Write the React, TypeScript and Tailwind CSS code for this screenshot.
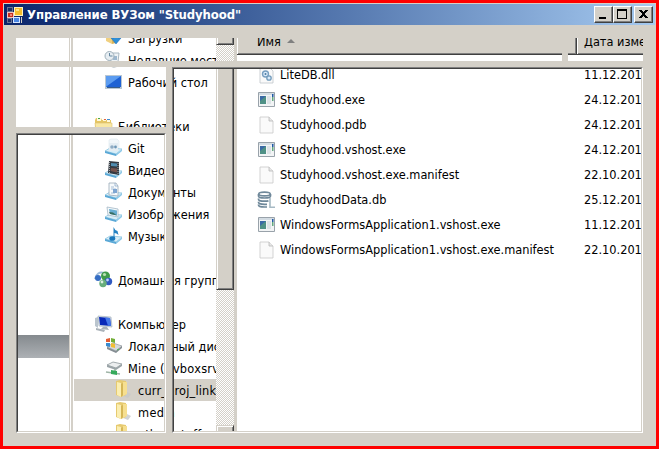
import React from "react";

type IconName =
  | "downloads" | "recent" | "desktop" | "library" | "git" | "video" | "docs" | "pictures" | "music"
  | "homegroup" | "computer" | "disk" | "netdrive" | "folder" | "dll" | "exe" | "page" | "db";

const Stand = () => (
  <>
    <path d="M1 13l5-3 12 1-6 5z" fill="#d8eef8" stroke="#8cc4e0" strokeWidth=".8" />
    <path d="M1 13l11 3v2L1 15z" fill="#5aa8d6" />
    <path d="M12 16l6-4.500v1.500l-6 5z" fill="#8cc8e8" />
  </>
);

const glyphs: Record<IconName, React.ReactNode> = {
  downloads: (
    <>
      <path d="M2 1l6-1v16l-6-3z" fill="#f0d080" />
      <path d="M8 1h4v14l-4 1z" fill="#dcb458" />
      <path d="M10 6h4v4h3l-5 6-5-6h3z" fill="#2f8fd8" stroke="#1c6cb8" strokeWidth=".5" />
    </>
  ),
  recent: (
    <>
      <path d="M6 3h9l-1 9H6z" fill="#eef3f6" stroke="#a9b8c2" />
      <path d="M9 6h4v4H9z" fill="#9db8cf" />
      <circle cx="5.500" cy="6" r="4.500" fill="#e6edf2" stroke="#a0b0ba" />
      <path d="M5.500 3v3h3" fill="none" stroke="#6688a0" />
      <path d="M5 13q4 4 9 0l2 2q-6 5-10 1z" fill="#b8c0c4" />
    </>
  ),
  desktop: (
    <>
      <path d="M1 3h17v14H1z" fill="#b9c7d3" />
      <path d="M2 4h15v11H2z" fill="#1e62d4" />
      <path d="M2 4h15L3 14l-1 1z" fill="#5c9cf0" />
      <path d="M3 15h13v1H3z" fill="#385c88" />
    </>
  ),
  library: (
    <>
      <path d="M1 4l1-2h5l1 2h9v13H1z" fill="#e6c665" />
      <path d="M3 2h4v3H3zM9 3h3v2H9zM13 4h3v2h-3z" fill="#fff9dd" />
      <path d="M4 2h2v1H4z" fill="#45a848" />
      <path d="M10 3h2v1h-2z" fill="#df6240" />
      <path d="M13 3h3v1h-3z" fill="#448fd0" />
      <path d="M1 7h17v9l-2 1H2z" fill="#f9e8a4" stroke="#dbc06f" strokeWidth=".6" />
    </>
  ),
  git: (
    <>
      <path d="M5 2l2-1h6l2 2v10H5z" fill="#f2f7fa" stroke="#dce8ef" strokeWidth=".6" />
      <Stand />
      <path d="M5 5h9v8H5z" fill="#e4edf3" />
      <circle cx="8" cy="9" r="1.800" fill="#8facc4" />
      <circle cx="11.500" cy="9" r="1.400" fill="#6c96b6" />
    </>
  ),
  video: (
    <>
      <Stand />
      <path d="M5 1l10 1v13L4 13z" fill="#343a42" />
      <path d="M7 3l6 .5v3L7 6z" fill="#508cb0" />
      <path d="M7 8l6 .5v4L6.500 11z" fill="#75524c" />
      <path d="M5.500 2v11M14 3v11" stroke="#a3a7aa" strokeDasharray="1 1" />
    </>
  ),
  docs: (
    <>
      <Stand />
      <path d="M5 1h7l2 3v10l-9-1z" fill="#f7fafc" stroke="#9ba9b7" strokeWidth=".8" />
      <path d="M11 1v3h3M7 5h3M7 7h5M7 11h4" fill="none" stroke="#92adcb" strokeWidth=".8" />
      <path d="M9 7h4v4H9z" fill="#7fa6d2" />
    </>
  ),
  pictures: (
    <>
      <Stand />
      <path d="M3 3l11 2v8L4 11z" fill="#f5f9fb" stroke="#a3b8c6" strokeWidth=".8" />
      <path d="M5 5l8 1.500v5L6 10z" fill="#67add2" />
      <path d="M5 8l4 .5 4 3L6 10z" fill="#376d62" />
    </>
  ),
  music: (
    <>
      <Stand />
      <path d="M9.500 13V1q1 3 4 4l1 4q-2-2-4-2v6" fill="#2483c4" />
      <ellipse cx="8.300" cy="12.500" rx="3" ry="2.300" fill="#1978bc" />
    </>
  ),
  homegroup: (
    <>
      <path d="M1 9q2-8 9-6" fill="none" stroke="#9cb9d8" strokeWidth="2" />
      <circle cx="4" cy="8" r="3" fill="#356dc4" />
      <circle cx="11.500" cy="6" r="4.500" fill="#409b4b" />
      <circle cx="14.500" cy="11.500" r="3.700" fill="#315ac0" />
      <circle cx="9" cy="13.500" r="3.700" fill="#67ad7b" />
      <circle cx="10.500" cy="4.500" r="1.600" fill="#b9e1b5" />
      <circle cx="13.500" cy="10" r="1.400" fill="#bed4f7" />
      <circle cx="8" cy="12" r="1.400" fill="#dcefe2" />
    </>
  ),
  computer: (
    <>
      <path d="M1 4l3-1v11l-3-2z" fill="#bac5ce" />
      <path d="M4 2l13 1 1 10-13-1z" fill="#d4dde4" stroke="#a7b4be" strokeWidth=".7" />
      <path d="M5 3l11 1 1 8-11-1z" fill="#0929b8" />
      <path d="M11 3.500l5 .5 1 8-3-.3z" fill="#4578e9" />
      <path d="M9 13h4l2 3-8-1zM2 14l9 2-1 2-8-2z" fill="#aab2b9" />
    </>
  ),
  disk: (
    <>
      <path d="M3 11l6-4 9 3-6 5z" fill="#d6d9dc" stroke="#92999e" strokeWidth=".7" />
      <path d="M3 11l9 4v2l-9-4zM12 15l6-5v2l-6 5z" fill="#858d93" />
      <path d="M2 3l4-1v4H2z" fill="#e35c32" />
      <path d="M7 2l4 1v4L7 6z" fill="#72ae37" />
      <path d="M2 7h4v4l-4-1z" fill="#388bd0" />
      <path d="M7 7l4 1v4l-4-1z" fill="#f2bf33" />
      <path d="M13 14l2-1" stroke="#44bc50" />
    </>
  ),
  netdrive: (
    <>
      <path d="M3 7l6-3 9 2-6 4z" fill="#eceeef" stroke="#8d979b" strokeWidth=".8" />
      <path d="M3 7l9 3v2L3 9zM12 10l6-4v2l-6 4z" fill="#9aa3a7" />
      <path d="M11 11v3M2 14l14 2" stroke="#9fb5a7" strokeWidth="1.600" />
      <path d="M7 12l6 1v4l-6-1z" fill="#36aa5c" />
    </>
  ),
  folder: (
    <>
      <path d="M13 12l4 2-3 4-5-2z" fill="#c7c9ca" opacity=".8" />
      <path d="M2 1l4-1 6 1v14l-5 2-5-2z" fill="#e6ca70" />
      <path d="M3 2l4 1v14l-4-2z" fill="#fbeeb1" />
      <path d="M7 4l2-1v12l-2 2z" fill="#d5b657" />
      <path d="M9 2h4v12l-4 2z" fill="#f6df90" />
    </>
  ),
  page: (
    <>
      <path d="M3 2h9l4 4v12H3z" fill="#fafafa" stroke="#c8c8c8" strokeWidth=".8" />
      <path d="M12 2v4h4" fill="#e8e8e8" stroke="#b7b7b7" strokeWidth=".8" />
    </>
  ),
  dll: (
    <>
      <path d="M3 2h9l4 4v12H3z" fill="#fafafa" stroke="#bfc5ca" strokeWidth=".8" />
      <circle cx="8.500" cy="9" r="3" fill="#d9eafa" stroke="#789fc1" strokeWidth="1.400" />
      <circle cx="12" cy="13" r="2.200" fill="#d9eafa" stroke="#719abb" strokeWidth="1.300" />
      <circle cx="8.500" cy="9" r="1" fill="#4d7ba1" />
    </>
  ),
  exe: (
    <>
      <path d="M1.500 2.500h16v14h-16z" fill="#f2f4f5" stroke="#99a2aa" />
      <path d="M2 3h15v2H2z" fill="#d3dce3" />
      <path d="M3 6h6v8H3z" fill="#4f9186" />
      <path d="M3 6h6L3 11z" fill="#3a6aa6" />
      <path d="M10 6h4v8h-4z" fill="#dce3e6" />
      <path d="M15 4h1.500v3H15z" fill="#2058a8" />
      <path d="M15 7h1.500v4H15z" fill="#64a980" />
    </>
  ),
  db: (
    <>
      <g fill="none" stroke="#6f889a" strokeWidth="1.700">
        <ellipse cx="7.500" cy="4" rx="5.700" ry="1.800" />
        <path d="M1.500 4v2q0 2 6 2t6-2V4M1.500 8.500v.7q0 2 6 2 3 0 4-.5M1.500 11.700v.6q0 2 6 2h2.500M1.500 14.500v.5q0 2 6 2H10" />
      </g>
      <path d="M13 8v9.200h5" fill="none" stroke="#a6b9c4" strokeWidth="1.600" />
    </>
  ),
};

const Icon = ({ name }: { name: IconName }) => (
  <svg viewBox="0 0 20 20" className="size-5 shrink-0">{glyphs[name]}</svg>
);

const tree: { label?: string; icon?: IconName; level?: 1 | 2 | 3; selected?: boolean; tracking?: string }[] = [
  { label: "Загрузки", icon: "downloads", level: 2 },
  { label: "Недавние места", icon: "recent", level: 2 },
  { label: "Рабочий стол", icon: "desktop", level: 2 },
  {},
  { label: "Библиотеки", icon: "library", level: 1 },
  { label: "Git", icon: "git", level: 2 },
  { label: "Видео", icon: "video", level: 2 },
  { label: "Документы", icon: "docs", level: 2 },
  { label: "Изображения", icon: "pictures", level: 2 },
  { label: "Музыка", icon: "music", level: 2 },
  {},
  { label: "Домашняя группа", icon: "homegroup", level: 1 },
  {},
  { label: "Компьютер", icon: "computer", level: 1 },
  { label: "Локальный диск", icon: "disk", level: 2 },
  { label: "Mine (\\\\vboxsrv)", icon: "netdrive", level: 2, tracking: "tracking-[.25px]" },
  { label: "curr_proj_link", icon: "folder", level: 3, selected: true, tracking: "tracking-[.17px]" },
  { label: "media", icon: "folder", level: 3, tracking: "tracking-[.35px]" },
  { label: "other_stuff", icon: "folder", level: 3, tracking: "tracking-[.17px]" },
];
const indent = { 1: "pl-[20px]", 2: "pl-[30px]", 3: "pl-[40px]" };

const files: [string, IconName, string][] = [
  ["LiteDB.dll", "dll", "11.12.2014"],
  ["Studyhood.exe", "exe", "24.12.2014"],
  ["Studyhood.pdb", "page", "24.12.2014"],
  ["Studyhood.vshost.exe", "exe", "24.12.2014"],
  ["Studyhood.vshost.exe.manifest", "page", "22.10.2014"],
  ["StudyhoodData.db", "db", "25.12.2014"],
  ["WindowsFormsApplication1.vshost.exe", "exe", "11.12.2014"],
  ["WindowsFormsApplication1.vshost.exe.manifest", "page", "22.10.2014"],
];

const raised =
  "border border-t-[#d4d0c8] border-l-[#d4d0c8] border-r-[#404040] border-b-[#404040] bg-[#d4d0c8] shadow-[inset_1px_1px_0_#fff,inset_-1px_-1px_0_#808080]";

const SunkenFrame = ({ className }: { className: string }) => (
  <div className={`pointer-events-none absolute border border-t-[#808080] border-l-[#808080] border-r-white border-b-white ${className}`}>
    <div className="h-full border border-t-[#404040] border-l-[#404040] border-r-[#d4d0c8] border-b-[#d4d0c8]" />
  </div>
);

const CaptionButton = ({ children, className = "" }: { children: React.ReactNode; className?: string }) => (
  <button className={`h-[17px] w-[19px] border border-t-white border-l-white border-r-[#404040] border-b-[#404040] bg-[#d4d0c8] shadow-[inset_-1px_-1px_0_#808080] ${className}`}>
    <svg viewBox="0 0 17 15" className="block h-[15px] w-[17px]" shapeRendering="crispEdges">{children}</svg>
  </button>
);

const TitleBar = () => (
  <header className="flex h-[21px] items-center bg-linear-to-r from-[#0a246a] to-[#a6caf0] pr-[2px] pl-[3px]">
    <svg viewBox="0 0 16 16" className="size-4 shrink-0" shapeRendering="crispEdges">
      <path d="M0 0h6v5H0zM0 11h5v5H0z" fill="#b9b7b2" opacity=".55" />
      <path d="M1 1h4v3H1zM1 12h3v3H1z" fill="#1d2f66" />
      <path d="M7 0h9v9H7z" fill="#fff3bd" />
      <path d="M8 1h7v7H8z" fill="#f5bd2c" />
      <path d="M9 2h3v2H9z" fill="#ffe48a" />
      <path d="M0 5h7v6H0z" fill="#f2c5bd" />
      <path d="M1 6h5v4H1z" fill="#c72d20" />
      <path d="M3 7h2v2H3z" fill="#ef8b78" />
      <path d="M6 10h7v6H6z" fill="#d5e5ff" />
      <path d="M7 11h5v4H7z" fill="#4a87e4" />
      <path d="M14 10h1v6h-1z" fill="#d4d0c8" />
    </svg>
    <h1 className="ml-1 grow text-[13px] leading-[21px] font-bold tracking-[-.1px] whitespace-pre text-white">Управление ВУЗом "Studyhood"</h1>
    <CaptionButton><path d="M4 10h7v2H4z" /></CaptionButton>
    <CaptionButton><path d="M3 2h10v10H3zM4 4v7h8V4z" fillRule="evenodd" /></CaptionButton>
    <CaptionButton className="ml-[2px]">
      <path d="M4 3h3v1H4zM10 3h3v1h-3zM5 4h3v1H5zM9 4h3v1H9zM6 5h5v1H6zM7 6h3v2H7zM6 8h5v1H6zM5 9h3v1H5zM9 9h3v1H9zM4 10h3v1H4zM10 10h3v1h-3z" />
    </CaptionButton>
  </header>
);

const Tree = () => (
  <div className="w-[143px] shrink-0 overflow-hidden pl-px">
    <ul className="-mt-[11px]">
      {tree.map((row, i) => (
        <li key={i} className={`flex h-[22px] items-center gap-1 whitespace-pre ${row.level ? indent[row.level] : ""} ${row.selected ? "bg-[#d4d0c8]" : ""}`}>
          {row.icon && <Icon name={row.icon} />}
          <span className={`pt-px leading-[18px] ${row.tracking ?? "tracking-[-.02px]"}`}>{row.label}</span>
        </li>
      ))}
    </ul>
  </div>
);

const Scrollbar = () => (
  <div className="flex w-[18px] shrink-0 flex-col bg-[repeating-conic-gradient(#d4d0c8_0_25%,#fff_0_50%)] bg-[length:2px_2px]">
    <div className={`-mt-[9px] h-4 shrink-0 ${raised}`} />
    <div className="h-[18px] shrink-0" />
    <div className={`h-[227px] shrink-0 ${raised}`} />
    <div className="grow" />
    <div className="h-2 shrink-0 overflow-hidden">
      <div className={`h-4 ${raised}`} />
    </div>
  </div>
);

const FileList = () => (
  <div className="min-w-0 grow overflow-hidden">
    <div className="flex h-[17px] border-b border-[#404040] bg-[#d4d0c8] leading-[8px] shadow-[inset_1px_0_0_#fff,inset_0_-1px_0_#808080]">
      <div className="flex w-[340px] shrink-0 gap-[6px] border-r border-[#404040] pl-[20px] shadow-[inset_-1px_0_0_#808080]">
        <span>Имя</span>
        <svg viewBox="0 0 8 4" className="mt-px h-1 w-2"><path d="M0 4l4-4 4 4z" fill="#808080" /></svg>
      </div>
      <div className="border-l border-white pl-[6px] whitespace-pre">Дата изменения</div>
    </div>
    <ul className="mt-[7px]">
      {files.map(([name, icon, date]) => (
        <li key={name} className="flex h-[25px] items-center pl-[20px] leading-[18px] whitespace-pre">
          <Icon name={icon} />
          <span className="w-[307px] shrink-0 pl-[3px]">{name}</span>
          <span>{date}</span>
        </li>
      ))}
    </ul>
  </div>
);

export default function App() {
  return (
    <main className="h-[449px] w-[659px] overflow-hidden border-3 border-[#ff0000] bg-[#d4d0c8] p-px font-['DejaVu_Sans_Condensed','DejaVu_Sans',sans-serif] text-[12.65px] text-black [font-stretch:condensed]">
      <TitleBar />
      <section className="relative mt-[13px] ml-3 flex h-[395px] w-[627px] overflow-hidden bg-white">
        <nav className="w-[53px] shrink-0 pt-[297px]">
          <div className="h-[23px] bg-linear-to-b from-[#858a8e] to-[#adb1b5]" />
        </nav>
        <div className="w-1 shrink-0 border-r-2 border-l border-[#d4d0c8] bg-white" />
        <Tree />
        <Scrollbar />
        <div className="w-[3px] shrink-0 bg-[#d4d0c8]" />
        <FileList />
        <div className="absolute top-[23px] left-0 h-[6px] w-full bg-[#d4d0c8]" />
        <div className="absolute top-0 left-[546px] h-[23px] w-[6px] bg-[#d4d0c8]" />
        <div className="absolute top-[89px] left-0 h-[6px] w-[150px] bg-[#d4d0c8]" />
        <div className="absolute top-[29px] left-[150px] h-[366px] w-[6px] bg-[#d4d0c8]" />
        <SunkenFrame className="top-[95px] left-0 h-[300px] w-[150px]" />
        <SunkenFrame className="top-[29px] left-[156px] h-[366px] w-[471px]" />
      </section>
    </main>
  );
}
